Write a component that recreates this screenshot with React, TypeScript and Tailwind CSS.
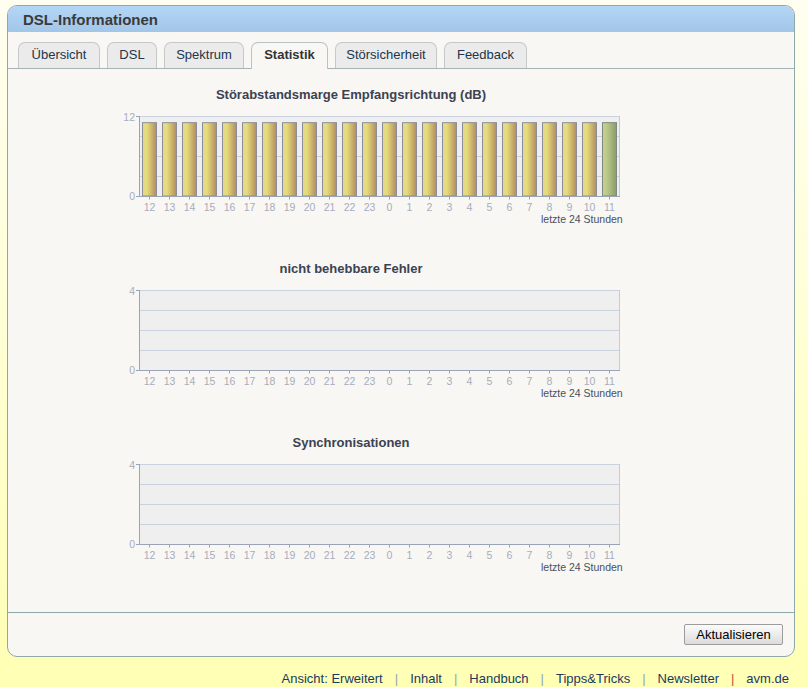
import React from "react";

const hours = [12, 13, 14, 15, 16, 17, 18, 19, 20, 21, 22, 23, 0, 1, 2, 3, 4, 5, 6, 7, 8, 9, 10, 11];

type ChartProps = { title: string; max: number; values?: number[] };

function Chart({ title, max, values }: ChartProps) {
  const L = 29.5;
  const R = 509.5;
  const T = 34;
  const B = 114;
  const H = B - T;
  return (
    <svg width={520} height={174} className="block ml-[102px]" style={{ fontFamily: '"Liberation Sans", Arial, sans-serif' }}>
      <defs>
        <linearGradient id="barY" x1="0" x2="1" y1="0" y2="0">
          <stop offset="0" stopColor="#e2d888" />
          <stop offset="0.3" stopColor="#e6dc7c" />
          <stop offset="1" stopColor="#b38c5e" />
        </linearGradient>
        <linearGradient id="barG" x1="0" x2="1" y1="0" y2="0">
          <stop offset="0" stopColor="#c6d292" />
          <stop offset="0.3" stopColor="#bcc987" />
          <stop offset="1" stopColor="#8a9c6a" />
        </linearGradient>
      </defs>
      <text x={241} y={17} textAnchor="middle" fontSize={13} fontWeight="bold" fill="#3b4252">
        {title}
      </text>
      <rect x={L} y={T} width={R - L} height={H} fill="#efefef" />
      {[0, 1, 2, 3].map((k) => (
        <line key={k} x1={L} x2={R} y1={T + 0.5 + k * 20} y2={T + 0.5 + k * 20} stroke="#c9d2de" strokeWidth={1} />
      ))}
      <line x1={R} x2={R} y1={T} y2={B} stroke="#c4ccd8" strokeWidth={1} />
      {values &&
        values.map((v, i) => {
          const h = (v / max) * H;
          return (
            <rect
              key={i}
              x={32.5 + i * 20}
              y={B - h}
              width={14}
              height={h}
              fill={i === values.length - 1 ? "url(#barG)" : "url(#barY)"}
              stroke={i === values.length - 1 ? "#7d8a82" : "#8b8e9a"}
              strokeWidth={1}
            />
          );
        })}
      <line x1={L} x2={L} y1={T} y2={B + 0.5} stroke="#9aa4b6" strokeWidth={1} />
      <line x1={L} x2={R + 0.5} y1={B + 0.5} y2={B + 0.5} stroke="#9aa4b6" strokeWidth={1} />
      <line x1={26} x2={L} y1={T + 0.5} y2={T + 0.5} stroke="#9aa4b6" strokeWidth={1} />
      <line x1={26} x2={L} y1={B + 0.5} y2={B + 0.5} stroke="#9aa4b6" strokeWidth={1} />
      {hours.map((h, i) => (
        <line key={"t" + i} x1={39.5 + i * 20} x2={39.5 + i * 20} y1={B} y2={B + 3.5} stroke="#9aa4b6" strokeWidth={1} />
      ))}
      <text x={25} y={38.5} textAnchor="end" fontSize={10.5} fill="#a6adbd">
        {max}
      </text>
      <text x={25} y={118.3} textAnchor="end" fontSize={10.5} fill="#a6adbd">
        0
      </text>
      {hours.map((h, i) => (
        <text key={"l" + i} x={39.5 + i * 20} y={128.5} textAnchor="middle" fontSize={10.5} fill="#a6adbd">
          {h}
        </text>
      ))}
      <text x={512.7} y={141} textAnchor="end" fontSize={10.5} fill="#4a4f5e">
        letzte 24 Stunden
      </text>
    </svg>
  );
}

const tabs: { label: string; w: string }[] = [
  { label: "Übersicht", w: "w-[82px]" },
  { label: "DSL", w: "w-[50px]" },
  { label: "Spektrum", w: "w-[80px]" },
  { label: "Statistik", w: "w-[77px]" },
  { label: "Störsicherheit", w: "w-[102px]" },
  { label: "Feedback", w: "w-[83px]" },
];

export default function App() {
  const font = { fontFamily: '"Liberation Sans", Arial, sans-serif' };
  return (
    <div
      className="w-[808px] h-[687px] overflow-hidden bg-gradient-to-b from-[#fffef0] to-[#ffffb4] pt-[5px]"
      style={font}
    >
      <div className="ml-[7px] w-[788px] h-[652px] border border-[#8ea7a9] rounded-[10px] overflow-hidden bg-[#f8f7f3] flex flex-col">
        <div className="h-[26px] bg-gradient-to-b from-[#b4d6f6] to-[#a2c6e8] flex items-center pl-[15px]">
          <span className="text-[15px] font-bold text-[#3a3a3a] leading-none">DSL-Informationen</span>
        </div>
        <div className="h-[37px] pt-[10px] pl-[10px] flex items-end gap-[7px] border-b border-[#a6b4b7]">
          {tabs.map((t) => {
            const active = t.label === "Statistik";
            return (
              <div
                key={t.label}
                className={
                  (active
                    ? "h-[27px] -mb-px pb-[3px] flex items-center justify-center rounded-t-[7px] border border-b-0 border-[#b9c2c4] bg-[#f8f7f3] text-[13px] font-bold text-[#333] whitespace-nowrap "
                    : "h-[26px] pb-[2px] flex items-center justify-center rounded-t-[7px] border border-b-0 border-[#c6c8c8] bg-[#ebebeb] text-[13px] text-[#22354c] whitespace-nowrap ") +
                  t.w
                }
              >
                {t.label}
              </div>
            );
          })}
        </div>
        <div className="h-[544px] pt-[13px] border-b border-[#8ea7a9]">
          <Chart title="Störabstandsmarge Empfangsrichtung (dB)" max={12} values={hours.map(() => 11)} />
          <Chart title="nicht behebbare Fehler" max={4} />
          <Chart title="Synchronisationen" max={4} />
        </div>
        <div className="flex-1 flex justify-end items-start pt-[11px] pr-[11px]">
          <button className="h-[21px] w-[99px] border border-[#9c9c9c] rounded-[2px] bg-gradient-to-b from-[#fbfbfb] to-[#dcdcdc] text-[13px] text-black leading-none">
            Aktualisieren
          </button>
        </div>
      </div>
      <div className="mt-[14px] pr-[19px] flex justify-end text-[13px] leading-[16px] text-[#1b3a60]">
        <span>Ansicht: Erweitert</span>
        <span className="px-[12px] text-[#8fa5b5]">|</span>
        <span>Inhalt</span>
        <span className="px-[12px] text-[#8fa5b5]">|</span>
        <span>Handbuch</span>
        <span className="px-[12px] text-[#8fa5b5]">|</span>
        <span>Tipps&amp;Tricks</span>
        <span className="px-[12px] text-[#8fa5b5]">|</span>
        <span>Newsletter</span>
        <span className="px-[12px] text-[#c0504a]">|</span>
        <span>avm.de</span>
      </div>
    </div>
  );
}
